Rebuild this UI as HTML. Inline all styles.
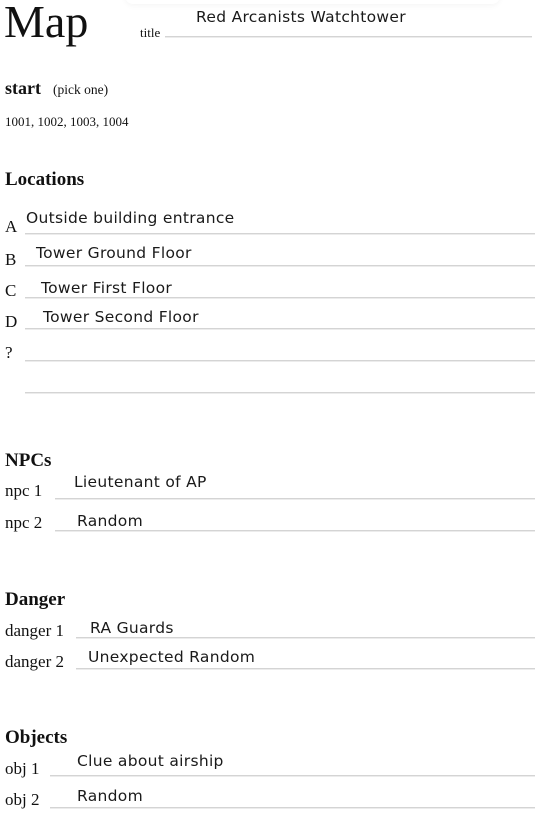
<!DOCTYPE html>
<html><head><meta charset="utf-8"><style>
body{margin:0;width:541px;height:813px;background:#fff;position:relative;overflow:hidden;font-family:"Liberation Serif",serif;color:#111}
.a{position:absolute;line-height:1;white-space:nowrap}
.l{position:absolute;height:1px;background:#d4d4d4;border-bottom:1px solid #ececec}
.h{font-family:"DejaVu Sans",sans-serif;font-size:15.5px;color:#1a1a1a;letter-spacing:0.3px}
.s{font-size:17px}
.b{font-weight:bold;font-size:19px}
</style></head><body>
<div style="position:absolute;left:125px;top:-20px;width:375px;height:24px;border-radius:8px;box-shadow:0 2px 6px rgba(0,0,0,0.04);"></div>
<div class="a" style="left:4px;top:-1px;font-size:46px">Map</div>
<div class="a" style="left:140px;top:26px;font-size:13px">title</div>
<div class="l" style="left:165px;top:36px;width:367px"></div>
<div class="a h" style="left:196px;top:10px">Red Arcanists Watchtower</div>

<div class="a" style="left:5px;top:79px;font-size:18px;font-weight:bold">start</div>
<div class="a" style="left:53px;top:83px;font-size:13.5px">(pick one)</div>
<div class="a" style="left:5px;top:115px;font-size:13px">1001, 1002, 1003, 1004</div>

<div class="a b" style="left:5px;top:170px">Locations</div>
<div class="a s" style="left:5px;top:218px">A</div>
<div class="a h" style="left:26px;top:211px">Outside building entrance</div>
<div class="l" style="left:25px;top:233px;width:510px"></div>
<div class="a s" style="left:5px;top:251px">B</div>
<div class="a h" style="left:36px;top:246px">Tower Ground Floor</div>
<div class="l" style="left:25px;top:265px;width:510px"></div>
<div class="a s" style="left:5px;top:282px">C</div>
<div class="a h" style="left:41px;top:281px">Tower First Floor</div>
<div class="l" style="left:25px;top:297px;width:510px"></div>
<div class="a s" style="left:5px;top:313px">D</div>
<div class="a h" style="left:43px;top:310px">Tower Second Floor</div>
<div class="l" style="left:25px;top:328px;width:510px"></div>
<div class="a s" style="left:5px;top:344px">?</div>
<div class="l" style="left:25px;top:360px;width:510px"></div>
<div class="l" style="left:25px;top:392px;width:510px"></div>

<div class="a b" style="left:5px;top:451px">NPCs</div>
<div class="a s" style="left:5px;top:482px">npc 1</div>
<div class="a h" style="left:74px;top:475px">Lieutenant of AP</div>
<div class="l" style="left:55px;top:498px;width:480px"></div>
<div class="a s" style="left:5px;top:514px">npc 2</div>
<div class="a h" style="left:77px;top:514px">Random</div>
<div class="l" style="left:55px;top:530px;width:480px"></div>

<div class="a b" style="left:5px;top:590px">Danger</div>
<div class="a s" style="left:5px;top:622px">danger 1</div>
<div class="a h" style="left:90px;top:621px">RA Guards</div>
<div class="l" style="left:76px;top:637px;width:459px"></div>
<div class="a s" style="left:5px;top:653px">danger 2</div>
<div class="a h" style="left:88px;top:650px">Unexpected Random</div>
<div class="l" style="left:76px;top:668px;width:459px"></div>

<div class="a b" style="left:5px;top:728px">Objects</div>
<div class="a s" style="left:5px;top:760px">obj 1</div>
<div class="a h" style="left:77px;top:754px">Clue about airship</div>
<div class="l" style="left:50px;top:775px;width:485px"></div>
<div class="a s" style="left:5px;top:791px">obj 2</div>
<div class="a h" style="left:77px;top:789px">Random</div>
<div class="l" style="left:50px;top:807px;width:485px"></div>
</body></html>
